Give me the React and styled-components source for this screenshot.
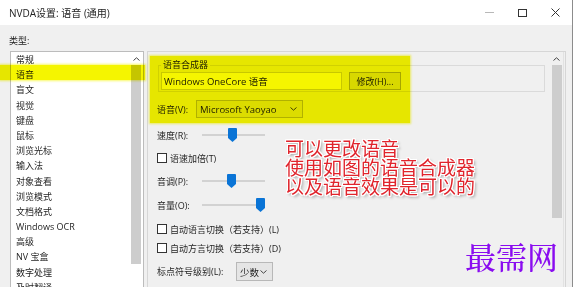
import React from "react";
import styled, { createGlobalStyle } from "styled-components";

const GlobalStyle = createGlobalStyle`
  html, body {
    margin: 0;
    padding: 0;
    background: #fff;
  }
  body {
    font-family: "Open Sans", "Noto Sans CJK SC", sans-serif;
    color: #1e1e1e;
  }
`;

const categories = [
  "常规",
  "语音",
  "盲文",
  "视觉",
  "键盘",
  "鼠标",
  "浏览光标",
  "输入法",
  "对象查看",
  "浏览模式",
  "文档格式",
  "Windows OCR",
  "高级",
  "NV 宝盒",
  "数字处理",
  "及时翻译",
];

function Chevron({ up }) {
  return (
    <svg width="7" height="4" viewBox="0 0 7 4">
      <polyline
        points={up ? "0.5,3.5 3.5,0.8 6.5,3.5" : "0.5,0.5 3.5,3.2 6.5,0.5"}
        fill="none"
        stroke="#444"
        strokeWidth="1"
      />
    </svg>
  );
}

function Thumb() {
  return (
    <svg width="9" height="14" viewBox="0 0 9 14">
      <path d="M0 1 Q0 0 1 0 H8 Q9 0 9 1 V10 L4.5 14 L0 10 Z" fill="#0a74d6" />
    </svg>
  );
}

function Dropdown({ width, children }) {
  return (
    <Select $width={width}>
      <span>{children}</span>
      <Chevron />
    </Select>
  );
}

function Slider({ label, value }) {
  return (
    <Row $top={10} $h={14}>
      <FieldLabel $width={45}>{label}</FieldLabel>
      <Track>
        <ThumbWrap style={{ left: value }}>
          <Thumb />
        </ThumbWrap>
      </Track>
    </Row>
  );
}

function Check({ top, children }) {
  return (
    <Row $top={top} $h={12}>
      <Box />
      <CheckText>{children}</CheckText>
    </Row>
  );
}

export default function App() {
  return (
    <>
      <GlobalStyle />
      <Window>
        <TitleBar>
          <Title>NVDA设置: 语音 (通用)</Title>
          <Controls>
            <Control>
              <svg width="9" height="1">
                <rect width="9" height="1" fill="#b8b8b8" />
              </svg>
            </Control>
            <Control>
              <svg width="9" height="8">
                <rect x="0.5" y="0.5" width="8" height="7" fill="none" stroke="#333" />
              </svg>
            </Control>
            <Control>
              <svg width="9" height="9">
                <path d="M0.5 0.5 L8.5 8.5 M8.5 0.5 L0.5 8.5" stroke="#333" strokeWidth="1" />
              </svg>
            </Control>
          </Controls>
        </TitleBar>

        <Body>
          <TypeLabel>类型:</TypeLabel>
          <Columns>
            <ListBox>
              <Items>
                {categories.map((c) => (
                  <Item key={c}>{c}</Item>
                ))}
              </Items>
              <ListScroll>
                <ArrowCell>
                  <Chevron up />
                </ArrowCell>
                <ScrollThumb $h={199} $w={10} />
              </ListScroll>
            </ListBox>

            <Panel>
              <Content>
                <Group>
                  <Legend>语音合成器</Legend>
                  <GroupRow>
                    <TextBox>Windows OneCore 语音</TextBox>
                    <Button>修改(H)...</Button>
                  </GroupRow>
                </Group>

                <Row $top={8} $h={18}>
                  <FieldLabel $width={39}>语音(V):</FieldLabel>
                  <Dropdown width={107}>Microsoft Yaoyao</Dropdown>
                </Row>

                <Slider label="速度(R):" value={26} />
                <Check top={10}>语速加倍(T)</Check>
                <Slider label="音调(P):" value={25} />
                <Slider label="音量(O):" value={54} />
                <Check top={11}>自动语言切换（若支持）(L)</Check>
                <Check top={7}>自动方言切换（若支持）(D)</Check>

                <Row $top={8} $h={19}>
                  <FieldLabel $width={79}>标点符号级别(L):</FieldLabel>
                  <Dropdown width={37}>少数</Dropdown>
                </Row>
              </Content>
              <PanelScroll>
                <ArrowCell>
                  <Chevron up />
                </ArrowCell>
                <ScrollThumb $h={153} $w={10} />
              </PanelScroll>
            </Panel>
          </Columns>
        </Body>

        <Highlight style={{ left: 0, top: 65, width: 145, height: 15 }} />
        <Highlight style={{ left: 150, top: 56, width: 260, height: 67 }} />

        <Note>
          可以更改语音
          <br />
          使用如图的语音合成器
          <br />
          以及语音效果是可以的
        </Note>
        <Mark>最需网</Mark>
      </Window>
    </>
  );
}

const Window = styled.div`
  position: relative;
  width: 572px;
  height: 287px;
  overflow: hidden;
  background: #f0f0f0;
  border-right: 1px solid #8c8c8c;
  font-size: 9px;
`;

const TitleBar = styled.div`
  height: 25px;
  display: flex;
  align-items: center;
  background: #fff;
  padding-left: 9px;
`;

const Title = styled.div`
  flex: 1;
  font-size: 10px;
  color: #222;
`;

const Controls = styled.div`
  display: flex;
  height: 100%;
`;

const Control = styled.div`
  width: 33px;
  display: flex;
  align-items: center;
  justify-content: center;
`;

const Body = styled.div`
  padding-left: 9px;
`;

const TypeLabel = styled.div`
  margin-top: 10px;
  line-height: 11px;
`;

const Columns = styled.div`
  margin-top: 5px;
  display: flex;
  align-items: flex-start;
  gap: 3px;
`;

const ListBox = styled.div`
  box-sizing: border-box;
  margin-left: 1px;
  width: 134px;
  height: 250px;
  background: #fff;
  border: 1px solid #bcbcbc;
  display: flex;
`;

const Items = styled.div`
  flex: 1;
`;

const Item = styled.div`
  height: 15.2px;
  line-height: 15.2px;
  padding-left: 5px;
  white-space: nowrap;
`;

const ListScroll = styled.div`
  width: 12px;
  margin-right: 1px;
  display: flex;
  flex-direction: column;
  align-items: center;
`;

const ArrowCell = styled.div`
  height: 13px;
  width: 100%;
  display: flex;
  align-items: center;
  justify-content: center;
`;

const ScrollThumb = styled.div`
  width: ${(p) => p.$w}px;
  height: ${(p) => p.$h}px;
  background: #cdcdcd;
`;

const Panel = styled.div`
  box-sizing: border-box;
  width: 419px;
  height: 250px;
  border: 1px solid #d6d6d6;
  display: flex;
`;

const Content = styled.div`
  flex: 1;
  padding-left: 9px;
  display: flex;
  flex-direction: column;
`;

const PanelScroll = styled.div`
  width: 13px;
  margin-right: 1px;
  display: flex;
  flex-direction: column;
  align-items: center;
  border-right: 1px solid #e2e2e2;
`;

const Group = styled.fieldset`
  box-sizing: border-box;
  width: 387px;
  margin: 8px 0 0 1px;
  padding: 2px 0 1px 2px;
  border: 1px solid #dadada;
  min-width: 0;
`;

const Legend = styled.legend`
  padding: 0 2px;
  line-height: 10px;
  font-size: 9px;
`;

const GroupRow = styled.div`
  display: flex;
  align-items: center;
  gap: 7px;
`;

const TextBox = styled.div`
  box-sizing: border-box;
  width: 181px;
  height: 18px;
  padding-left: 2px;
  background: #fff;
  border: 1px solid #d0d0d0;
  display: flex;
  align-items: center;
  font-size: 9.5px;
`;

const Button = styled.div`
  box-sizing: border-box;
  width: 52px;
  height: 18px;
  background: #e1e1e1;
  border: 1px solid #adadad;
  display: flex;
  align-items: center;
  justify-content: center;
`;

const Row = styled.div`
  margin-top: ${(p) => p.$top}px;
  height: ${(p) => p.$h}px;
  display: flex;
  align-items: center;
`;

const FieldLabel = styled.div`
  width: ${(p) => p.$width}px;
  white-space: nowrap;
`;

const Select = styled.div`
  box-sizing: border-box;
  width: ${(p) => p.$width}px;
  height: 100%;
  padding: 0 5px 0 3px;
  background: #e5e5e5;
  border: 1px solid #b8b8b8;
  display: flex;
  align-items: center;
  justify-content: space-between;
  font-size: 9.5px;
`;

const Track = styled.div`
  position: relative;
  width: 63px;
  height: 14px;
  &::before {
    content: "";
    position: absolute;
    left: 0;
    right: 0;
    top: 6px;
    height: 2px;
    background: #d2d2d2;
  }
`;

const ThumbWrap = styled.div`
  position: absolute;
  top: 0;
  line-height: 0;
`;

const Box = styled.div`
  box-sizing: border-box;
  width: 10px;
  height: 10px;
  background: #fff;
  border: 1px solid #333;
`;

const CheckText = styled.div`
  margin-left: 3px;
  white-space: nowrap;
`;

const Highlight = styled.div`
  position: absolute;
  background: #f5f500;
  mix-blend-mode: multiply;
  box-shadow: 0 0 2px 1px rgba(245, 245, 0, 0.6);
`;

const Note = styled.div`
  position: absolute;
  left: 285px;
  top: 138px;
  font-family: "Noto Sans CJK SC", sans-serif;
  font-size: 19px;
  line-height: 19px;
  color: #e0242c;
  white-space: nowrap;
  text-shadow: 1px 0 0 #fff, -1px 0 0 #fff, 0 1px 0 #fff, 0 -1px 0 #fff,
    1px 1px 0 #fff, -1px -1px 0 #fff, 1px -1px 0 #fff, -1px 1px 0 #fff,
    2px 2px 3px rgba(0, 0, 0, 0.45);
`;

const Mark = styled.div`
  position: absolute;
  left: 465px;
  top: 240px;
  font-family: "Noto Serif CJK SC", "Noto Sans CJK SC", serif;
  font-size: 31px;
  line-height: 31px;
  font-weight: 500;
  color: #8a0cf0;
  white-space: nowrap;
`;
